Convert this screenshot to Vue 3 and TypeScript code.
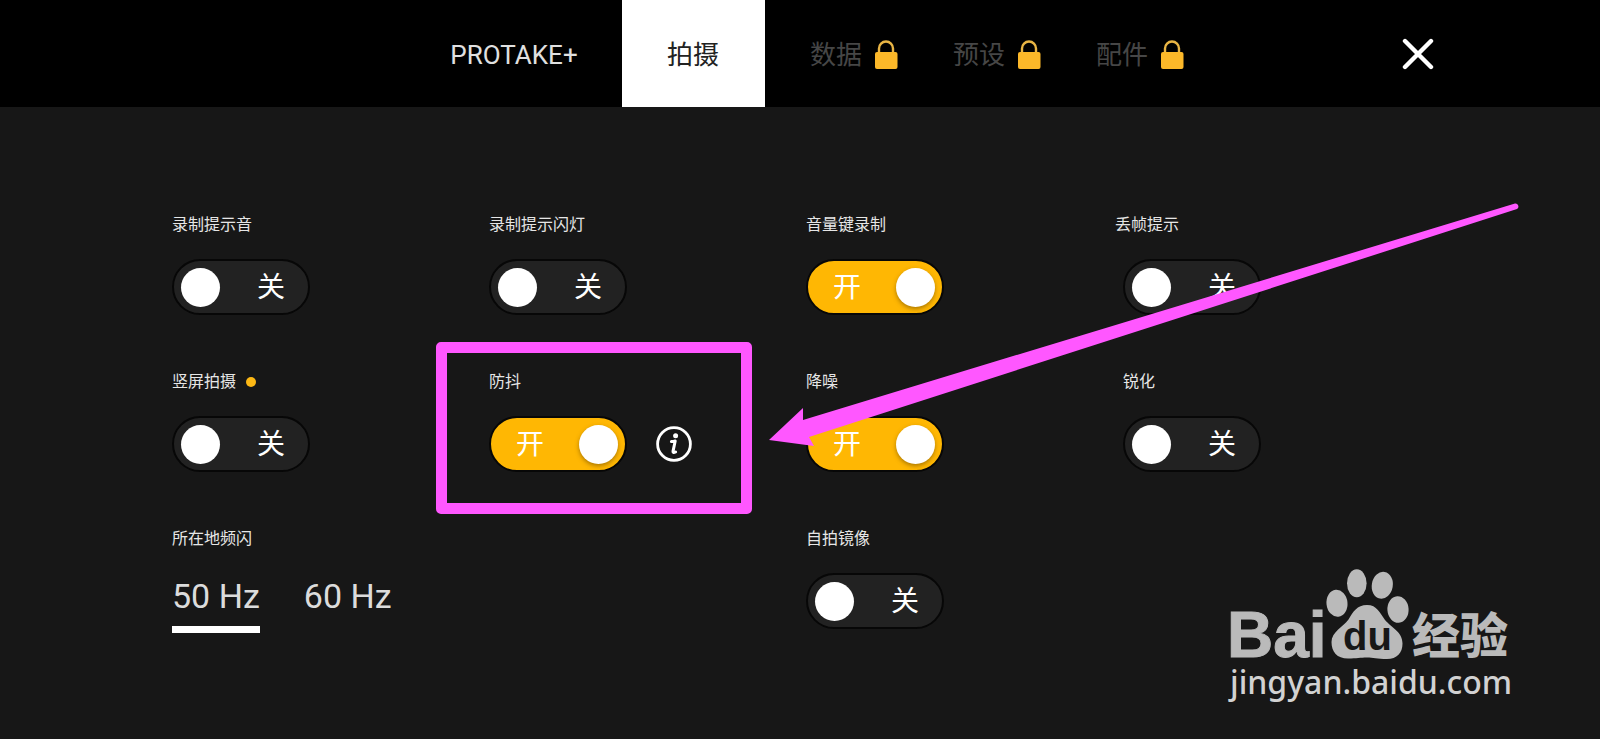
<script setup lang="ts">
import { reactive, ref } from 'vue'

interface Tab {
  id: string
  name: string
  locked: boolean
}

interface Setting {
  id: string
  name: string
  on: boolean
  column: number
  isNew?: boolean
  info?: boolean
  marked?: boolean
  wideLabel?: boolean
}

const tabs: Tab[] = [
  { id: 'plus', name: 'PROTAKE+', locked: false },
  { id: 'shoot', name: '拍摄', locked: false },
  { id: 'data', name: '数据', locked: true },
  { id: 'preset', name: '预设', locked: true },
  { id: 'accessory', name: '配件', locked: true },
]
const activeTab = ref('shoot')

const settings = reactive<Setting[]>([
  { id: 'record-sound', name: '录制提示音', on: false, column: 1 },
  { id: 'record-flash', name: '录制提示闪灯', on: false, column: 2 },
  { id: 'volume-record', name: '音量键录制', on: true, column: 3 },
  { id: 'frame-drop', name: '丢帧提示', on: false, column: 4, wideLabel: true },
  { id: 'portrait', name: '竖屏拍摄', on: false, column: 1, isNew: true },
  { id: 'stabilize', name: '防抖', on: true, column: 2, info: true, marked: true },
  { id: 'denoise', name: '降噪', on: true, column: 3 },
  { id: 'sharpen', name: '锐化', on: false, column: 4 },
  { id: 'mirror', name: '自拍镜像', on: false, column: 3 },
])

const frequencies = ['50 Hz', '60 Hz']
const frequency = ref('50 Hz')

function selectTab(tab: Tab) {
  if (!tab.locked) activeTab.value = tab.id
}
</script>

<template>
  <div class="page">
    <header class="topbar">
      <nav class="tabs">
        <button
          v-for="tab in tabs"
          :key="tab.id"
          type="button"
          class="tab"
          :class="{ active: tab.id === activeTab, locked: tab.locked, brand: tab.id === 'plus' }"
          @click="selectTab(tab)"
        >
          {{ tab.name }}
          <svg v-if="tab.locked" class="lock" viewBox="0 0 24 30" aria-hidden="true">
            <path d="M5 13V8.500a7 7 0 0 1 14 0V13" fill="none" stroke="#e9b544" stroke-width="2.400" />
            <rect x="1" y="12" width="22.500" height="17" rx="2" fill="#fcb829" />
          </svg>
        </button>
      </nav>
      <button type="button" class="close" aria-label="关闭">
        <svg viewBox="0 0 32 32" aria-hidden="true">
          <path d="M3 3 29 29M29 3 3 29" stroke="#fff" stroke-width="4.400" stroke-linecap="round" />
        </svg>
      </button>
    </header>

    <main class="settings">
      <div
        v-for="item in settings"
        :key="item.id"
        class="setting"
        :class="['col-' + item.column, { marked: item.marked, 'wide-label': item.wideLabel }]"
      >
        <label class="title" :for="item.id">{{ item.name }}<i v-if="item.isNew" class="dot"></i></label>
        <div class="controls">
          <span class="switch" :class="{ on: item.on }">
            <input :id="item.id" v-model="item.on" type="checkbox" role="switch" />
            <span class="knob"></span>
            <span class="word">{{ item.on ? '开' : '关' }}</span>
          </span>
          <button v-if="item.info" type="button" class="info" aria-label="说明">
            <svg viewBox="0 0 36 36" aria-hidden="true">
              <circle cx="18" cy="18" r="16.400" fill="none" stroke="#fff" stroke-width="2.800" />
              <circle cx="19.600" cy="9.800" r="2.500" fill="#fff" />
              <path
                d="M15.400 15.600Q17.500 15.600 19.200 15L17 25.400Q16.800 27.400 19.600 26"
                fill="none"
                stroke="#fff"
                stroke-width="3"
                stroke-linejoin="round"
                stroke-linecap="round"
              />
            </svg>
          </button>
        </div>
        <svg v-if="item.marked" class="arrow" viewBox="0 0 756 246" aria-hidden="true">
          <path
            d="M2 238 36 206V218L748 1.500A3 3 0 0 1 750 7L42 235 47 244Z"
            fill="#ff57ff"
          />
        </svg>
      </div>

      <fieldset class="setting col-1 flicker">
        <legend class="title">所在地频闪</legend>
        <div class="choices">
          <label v-for="value in frequencies" :key="value" class="choice" :class="{ chosen: value === frequency }">
            <input v-model="frequency" type="radio" name="frequency" :value="value" />{{ value }}
          </label>
        </div>
      </fieldset>
    </main>

    <svg class="watermark" viewBox="0 0 320 160" role="img" aria-label="Baidu 经验">
      <g fill="#bababa">
        <text class="mark-latin" x="17" y="107">Bai</text>
        <ellipse cx="127" cy="53.300" rx="10.500" ry="13.500" transform="rotate(-6 127 53.300)" />
        <ellipse cx="146.800" cy="33.300" rx="9.800" ry="14" />
        <ellipse cx="172.300" cy="35.300" rx="10.500" ry="13.500" transform="rotate(10 172.300 35.300)" />
        <ellipse cx="188" cy="59.500" rx="10.600" ry="13.300" transform="rotate(-4 188 59.500)" />
        <path
          d="M157 55C167 55 170 63 175 70C182 78 192.500 82 192.500 93.500C192.500 103 187 109 177 109C167 109 163 107.500 157 107.500C150 107.500 147 108.500 138 108.500C127 108.500 121.500 102 121.500 92C121.500 82 133 77 138.500 69.500C143 62 147 55 157 55Z"
        />
        <text class="mark-cjk" x="202" y="103">经验</text>
      </g>
      <text class="mark-du" x="133" y="100">du</text>
      <text class="mark-site" x="20" y="144">jingyan.baidu.com</text>
    </svg>
  </div>
</template>

<style>
body {
  margin: 0;
  background: #171717;
}
</style>

<style scoped>
.page {
  position: relative;
  box-sizing: border-box;
  min-height: 100vh;
  overflow: hidden;
  background: #171717;
  color: #fff;
  font-family: Roboto, 'Noto Sans CJK SC', sans-serif;
}

button {
  margin: 0;
  padding: 0;
  border: 0;
  background: none;
  color: inherit;
  font: inherit;
  cursor: pointer;
}

.topbar {
  display: grid;
  grid-template-columns: 1fr auto 1fr;
  height: 107px;
  background: #000;
}

.tabs {
  grid-column: 2;
  display: flex;
}

.tab {
  display: flex;
  align-items: center;
  justify-content: center;
  gap: 12px;
  box-sizing: border-box;
  width: 143px;
  padding-top: 2px;
  font-size: 26px;
  line-height: 32px;
}

.tab.brand {
  width: 215px;
  color: #e0e0e0;
}

.tab.active {
  background: #fff;
  color: #222;
}

.tab.locked {
  padding-left: 36px;
  color: #464646;
}

.lock {
  width: 24px;
  height: 30px;
}

.close {
  justify-self: center;
  align-self: center;
  width: 32px;
  height: 32px;
  margin-left: 42px;
}

.close svg,
.info svg {
  display: block;
  width: 100%;
  height: 100%;
}

.settings {
  display: grid;
  grid-template-columns: repeat(4, 1fr);
  row-gap: 56px;
  padding: 107px 160px 40px 172px;
}

.setting {
  display: flex;
  flex-direction: column;
  align-items: flex-start;
  gap: 23px;
  min-width: 0;
}

.col-1 {
  grid-column: 1;
}

.col-2 {
  grid-column: 2;
}

.col-3 {
  grid-column: 3;
}

.col-4 {
  grid-column: 4;
}

.title {
  display: flex;
  align-items: center;
  padding: 0;
  color: #e6e6e6;
  font-size: 16px;
  line-height: 22px;
}

.wide-label .title {
  margin-left: -8px;
}

.dot {
  width: 10px;
  height: 10px;
  margin-left: 10px;
  border-radius: 50%;
  background: #fcb815;
}

.controls {
  display: flex;
  align-items: center;
  gap: 29px;
}

.switch {
  position: relative;
  display: flex;
  align-items: center;
  justify-content: space-between;
  box-sizing: border-box;
  width: 138px;
  height: 56px;
  padding: 0 23px 0 7px;
  border: 2px solid #070707;
  border-radius: 28px;
  background: #222;
}

.switch.on {
  flex-direction: row-reverse;
  padding: 0 7px 0 25px;
  background: #ffb703;
}

.switch input {
  position: absolute;
  inset: 0;
  width: 100%;
  height: 100%;
  margin: 0;
  opacity: 0;
  cursor: pointer;
}

.knob {
  width: 39px;
  height: 39px;
  border-radius: 50%;
  background: #fff;
}

.on .knob {
  box-shadow: 0 2px 4px rgba(90, 60, 0, 0.5);
}

.word {
  padding-top: 2px;
  font-size: 28px;
  line-height: 36px;
}

.info {
  width: 36px;
  height: 36px;
}

.marked {
  position: relative;
}

.marked::before {
  content: '';
  position: absolute;
  top: -29px;
  left: -53px;
  box-sizing: border-box;
  width: 316px;
  height: 172px;
  border: 11px solid #ff57ff;
  border-radius: 5px;
  pointer-events: none;
}

.arrow {
  position: absolute;
  z-index: 2;
  top: -169px;
  left: 278px;
  width: 756px;
  height: 246px;
  pointer-events: none;
}

.flicker {
  grid-row: 3;
  margin: 0;
  padding: 0;
  border: 0;
}

.choices {
  display: flex;
  gap: 44px;
  margin-top: 23px;
}

.choice {
  padding-bottom: 7px;
  border-bottom: 7px solid transparent;
  color: #dcdcdc;
  font-size: 34px;
  line-height: 46px;
  cursor: pointer;
}

.choice.chosen {
  border-bottom-color: #fff;
}

.choice input {
  position: absolute;
  opacity: 0;
  margin: 0;
}

.watermark {
  position: absolute;
  right: 70px;
  bottom: 29px;
  width: 320px;
  height: 160px;
  pointer-events: none;
}

.mark-latin {
  font: bold 64px 'Liberation Sans', sans-serif;
  stroke: #bababa;
  stroke-width: 1px;
}

.mark-cjk {
  font: 900 48px 'Noto Sans CJK SC', sans-serif;
}

.mark-du {
  font: bold 40px 'Liberation Sans', sans-serif;
  fill: #171717;
}

.mark-site {
  font: 500 32px 'Noto Sans', sans-serif;
  fill: #d2d2d2;
}
</style>
